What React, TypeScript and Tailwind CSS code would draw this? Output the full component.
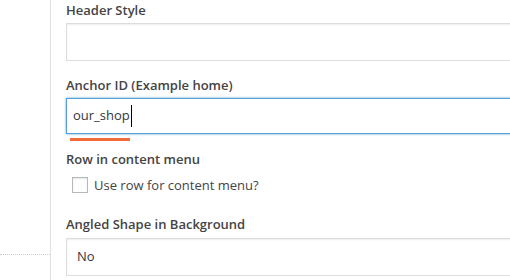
const Label = ({ children }: { children: string }) => (
  <div className="text-[13px] leading-[18px] font-semibold text-[#444]">{children}</div>
);

const App = () => {
  return (
    <div className="flex h-[280px] w-[510px] overflow-hidden bg-white font-['Open_Sans',sans-serif]">
      {/* left sidebar strip */}
      <div className="relative w-[51px] shrink-0 border-r border-[#e1e1e1]">
        <div className="absolute left-0 top-[254px] w-[50px] border-t border-dotted border-[#ccc]" />
      </div>

      <div className="flex-1 pl-[15px] pt-[1px]">
        <Label>Header Style</Label>
        <div className="mt-[4px] h-[38px] -mr-2 border border-[#ddd] shadow-[inset_0_1px_2px_rgba(0,0,0,0.07)]" />

        <div className="mt-[15px]">
          <Label>Anchor ID (Example home)</Label>
        </div>
        <div className="mt-[4px] -mr-2 flex h-[36px] items-center border border-[#5b9dd9] pl-[6px] shadow-[0_0_2px_rgba(30,140,190,0.8)]">
          <span className="text-[13px] text-[#32373c]">our_shop</span>
          <span className="ml-[1px] h-[22px] w-px bg-black" />
        </div>
        <div className="ml-[4px] mt-[4px] h-[3px] w-[60px] bg-[#f26c3a]" />

        <div className="mt-[9px]">
          <Label>Row in content menu</Label>
        </div>
        <label className="mt-[9px] ml-[6px] flex items-center gap-[6px]">
          <span className="h-[16px] w-[16px] border border-[#b4b9be] bg-white shadow-[inset_0_1px_2px_rgba(0,0,0,0.1)]" />
          <span className="text-[13px] leading-[16px] text-[#444]">Use row for content menu?</span>
        </label>

        <div className="mt-[22px]">
          <Label>Angled Shape in Background</Label>
        </div>
        <div className="mt-[5px] -mr-2 flex h-[38px] items-center border border-[#ddd] pl-[10px] shadow-[inset_0_1px_2px_rgba(0,0,0,0.07)]">
          <span className="text-[13px] text-[#32373c]">No</span>
        </div>
      </div>
    </div>
  );
};

export default App;
